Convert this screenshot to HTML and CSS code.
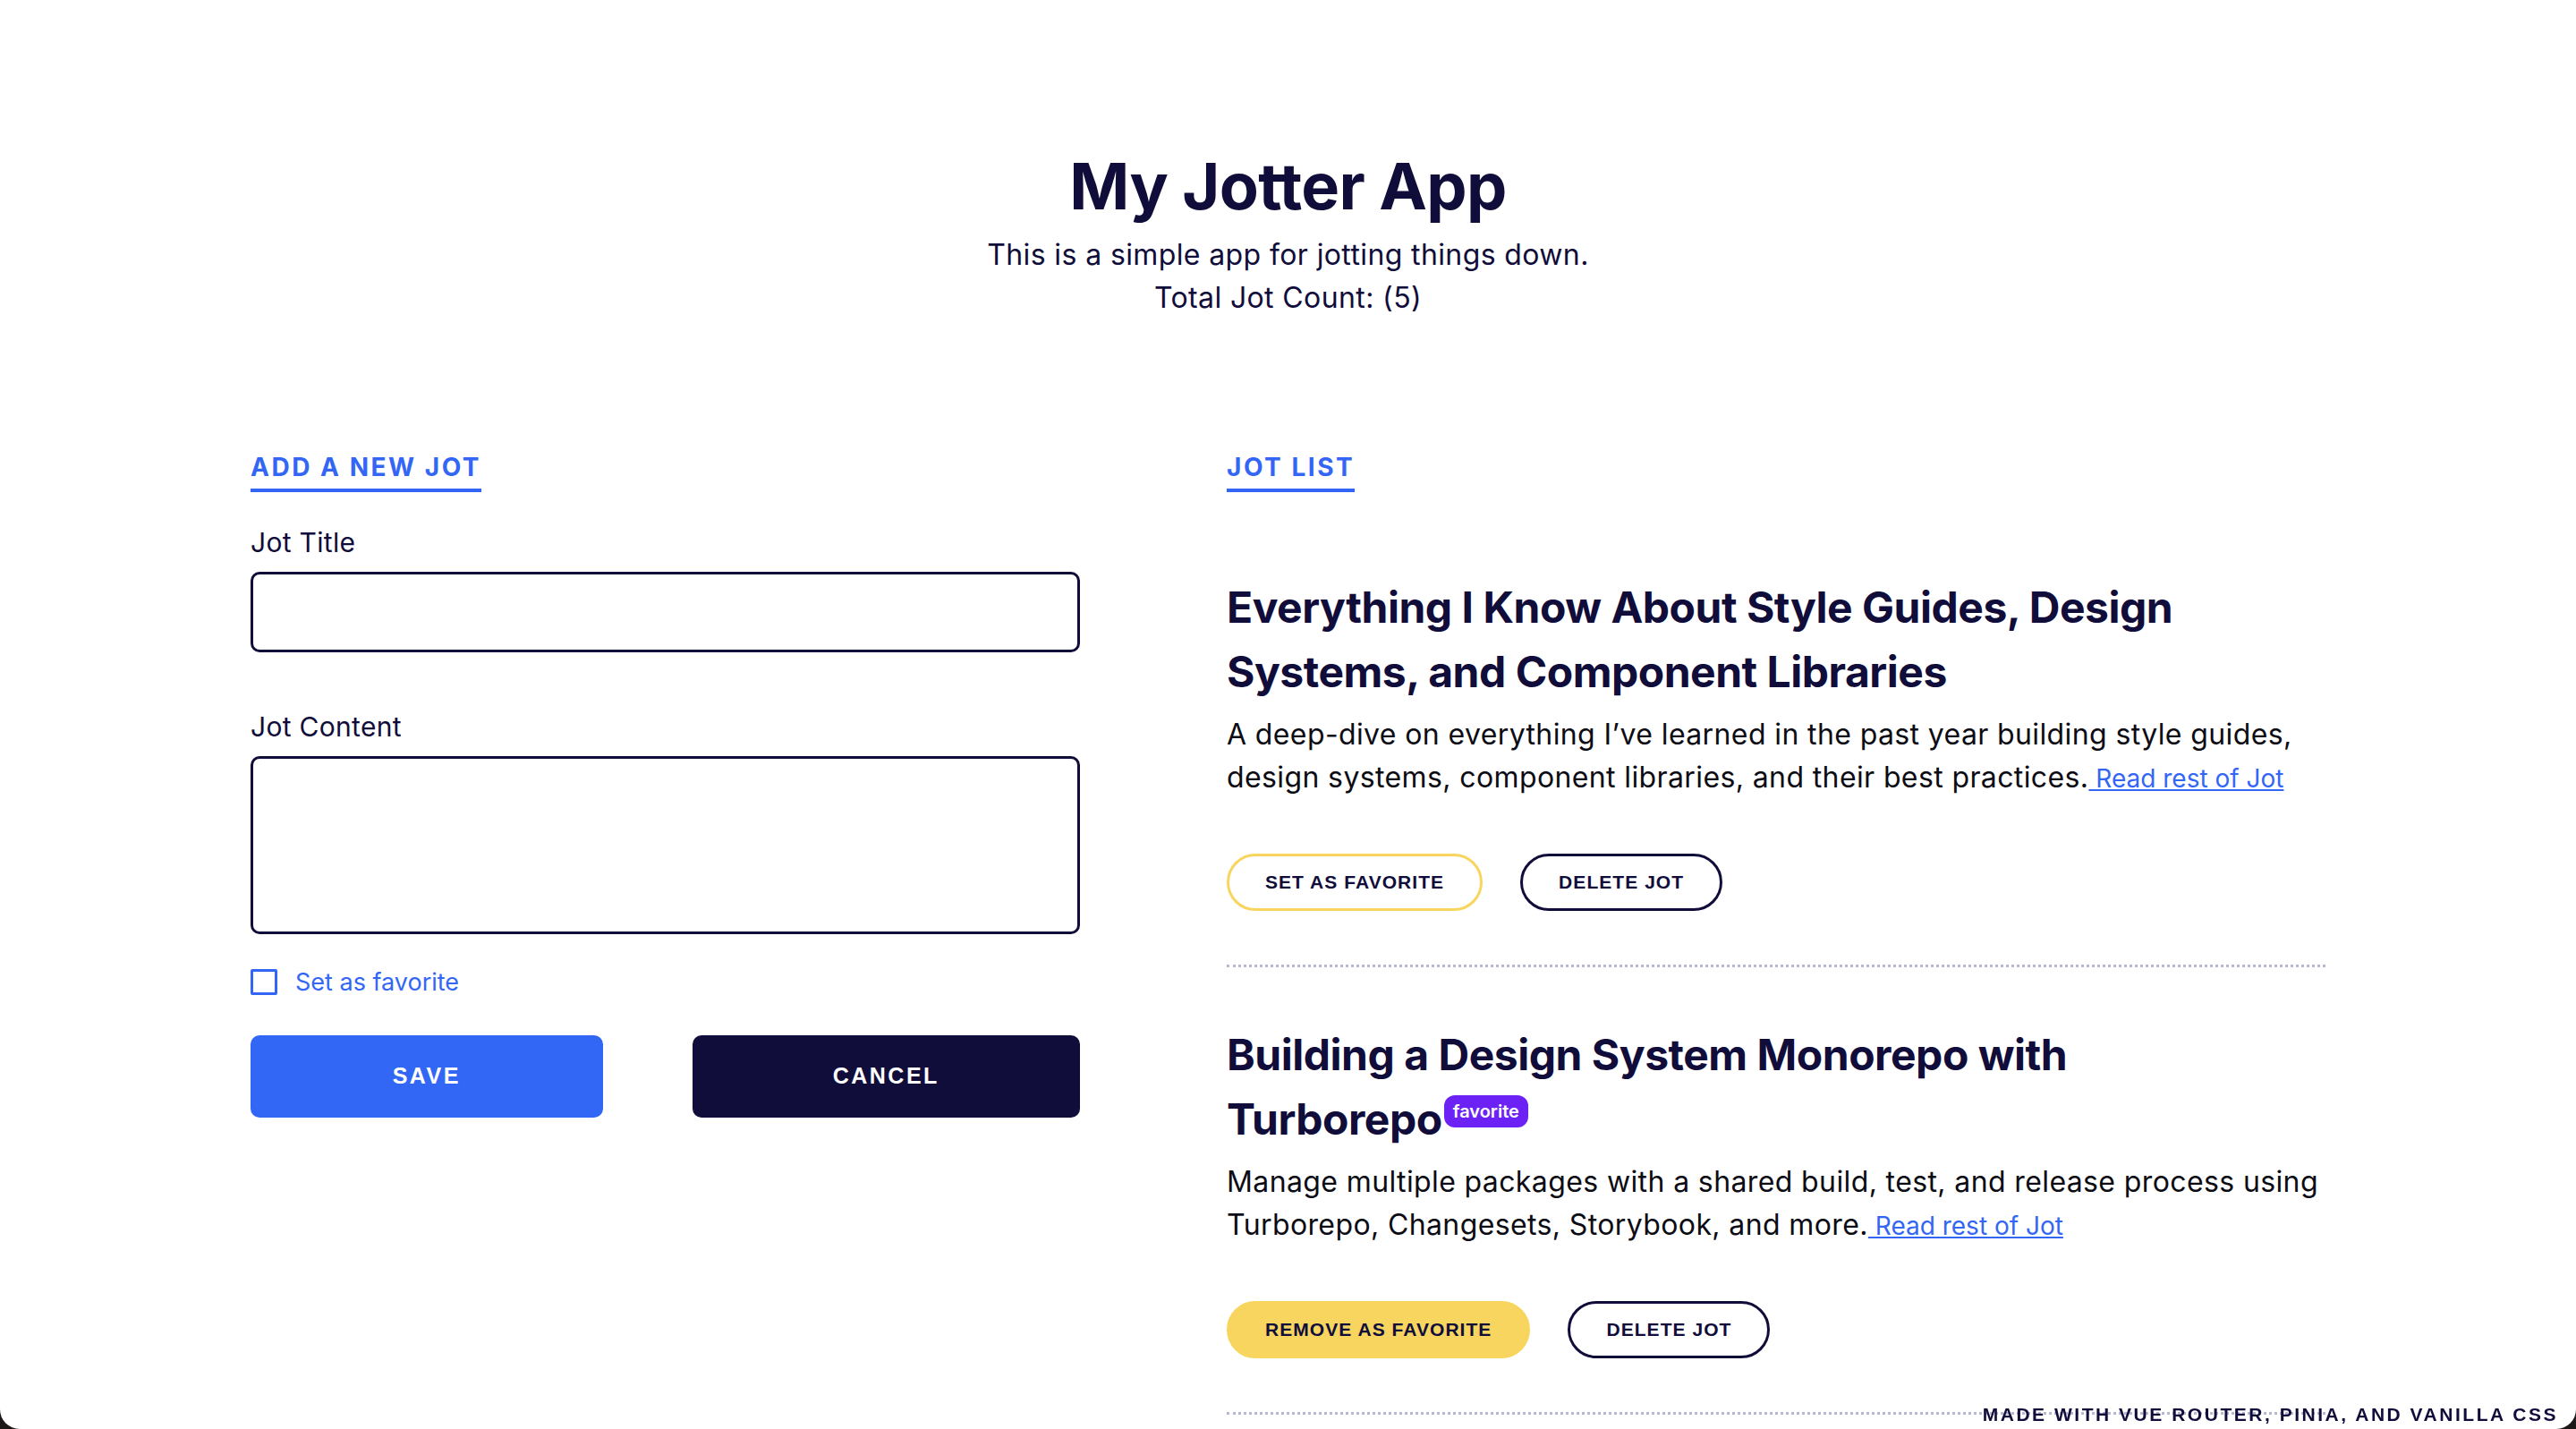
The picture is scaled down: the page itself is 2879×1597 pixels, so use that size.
FILE: index.html
```html
<!DOCTYPE html>
<html lang="en">
<head>
<meta charset="utf-8">
<title>My Jotter App</title>
<link rel="stylesheet" href="styles.css">
</head>
<body>
<div class="window">
  <header class="hero">
    <h1 class="hero-title">My Jotter App</h1>
    <p class="hero-text">This is a simple app for jotting things down.</p>
    <p class="hero-text">Total Jot Count: (5)</p>
  </header>

  <main class="columns">
    <section class="form-col">
      <h2 class="section-title">Add a new jot</h2>
      <form class="jot-form">
        <label class="field-label" for="jot-title">Jot Title</label>
        <input class="field-input" id="jot-title" type="text">
        <label class="field-label field-label--spaced" for="jot-content">Jot Content</label>
        <textarea class="field-textarea" id="jot-content"></textarea>
        <label class="check-row">
          <input class="check-box" type="checkbox">
          <span class="check-text">Set as favorite</span>
        </label>
        <div class="form-actions">
          <button class="btn btn--save" type="button">Save</button>
          <button class="btn btn--cancel" type="button">Cancel</button>
        </div>
      </form>
    </section>

    <section class="list-col">
      <h2 class="section-title">Jot list</h2>
      <ul class="jot-list">
        <li class="jot">
          <h3 class="jot-title">Everything I Know About Style Guides, Design Systems, and Component Libraries</h3>
          <p class="jot-desc">A deep-dive on everything I’ve learned in the past year building style guides, design systems, component libraries, and their best practices.<a class="jot-link" href="#"> Read rest of Jot</a></p>
          <div class="jot-actions">
            <button class="pill pill--fav" type="button">Set as favorite</button>
            <button class="pill pill--delete" type="button">Delete jot</button>
          </div>
        </li>
        <li class="jot">
          <h3 class="jot-title">Building a Design System Monorepo with <span class="nowrap">Turborepo<span class="badge">favorite</span></span></h3>
          <p class="jot-desc">Manage multiple packages with a shared build, test, and release process using Turborepo, Changesets, Storybook, and more.<a class="jot-link" href="#"> Read rest of Jot</a></p>
          <div class="jot-actions">
            <button class="pill pill--unfav" type="button">Remove as favorite</button>
            <button class="pill pill--delete" type="button">Delete jot</button>
          </div>
        </li>
      </ul>
    </section>
  </main>

  <footer class="credit">Made with Vue Router, Pinia, and Vanilla CSS</footer>
</div>
</body>
</html>
```

FILE: styles.css
```css
* { box-sizing: border-box; }

html, body {
  margin: 0;
  height: 100%;
}

body {
  background: #1c1818;
  font-family: "Inter", "Liberation Sans", sans-serif;
  color: #110d3a;
  overflow: hidden;
}

.window {
  height: 100vh;
  background: #ffffff;
  border-radius: 0 0 22px 22px;
  overflow: hidden;
  padding-top: 165px;
}

.hero {
  text-align: center;
}

.hero-title {
  margin: 0 0 10px;
  font-size: 72px;
  line-height: 1.2;
  font-weight: 700;
  letter-spacing: -0.01em;
  color: #110d3a;
}

.hero-text {
  margin: 0;
  font-size: 32px;
  line-height: 48px;
  letter-spacing: 0.012em;
  color: #110d3a;
}

.columns {
  display: grid;
  grid-template-columns: 927px 1228px;
  column-gap: 164px;
  width: 2319px;
  margin: 149px auto 0;
  align-items: start;
}

.section-title {
  display: inline-block;
  margin: 0;
  font-size: 28px;
  line-height: 1.2;
  font-weight: 700;
  text-transform: uppercase;
  letter-spacing: 0.09em;
  color: #3366f5;
  padding-bottom: 6px;
  border-bottom: 4px solid #3366f5;
}

.jot-form {
  display: flex;
  flex-direction: column;
  margin-top: 34px;
}

.field-label {
  font-size: 30px;
  line-height: 45px;
  letter-spacing: 0.01em;
  color: #110d3a;
  margin-bottom: 10px;
}

.field-label--spaced {
  margin-top: 61px;
}

.field-input,
.field-textarea {
  width: 100%;
  border: 3px solid #110d3a;
  border-radius: 10px;
  font-family: inherit;
  font-size: 30px;
  padding: 0 20px;
  background: #fff;
  color: #110d3a;
}

.field-input { height: 90px; }

.field-textarea {
  height: 199px;
  resize: none;
  padding: 16px 20px;
}

.check-row {
  display: flex;
  align-items: center;
  gap: 20px;
  margin-top: 39px;
  color: #3366f5;
  font-size: 27px;
  line-height: 29px;
}

.check-box {
  appearance: none;
  -webkit-appearance: none;
  margin: 0;
  width: 30px;
  height: 29px;
  border: 3px solid #3366f5;
  border-radius: 2px;
  background: #fff;
}

.form-actions {
  display: flex;
  gap: 100px;
  margin-top: 45px;
}

.btn {
  height: 92px;
  border: 0;
  border-radius: 10px;
  font-family: "Liberation Sans", Arial, sans-serif;
  font-size: 25px;
  font-weight: 700;
  letter-spacing: 0.1em;
  text-transform: uppercase;
  color: #ffffff;
}

.btn--save {
  width: 394px;
  background: #3267f5;
}

.btn--cancel {
  width: 434px;
  background: #110d3a;
}

.jot-list {
  list-style: none;
  margin: 31px 0 0;
  padding: 0;
}

.jot {
  padding: 62px 0 60px;
  border-bottom: 3px dotted #b5b7d3;
}

.jot-title {
  margin: 0;
  font-size: 48px;
  line-height: 72px;
  font-weight: 700;
  letter-spacing: -0.01em;
  color: #110d3a;
}

.nowrap {
  white-space: nowrap;
}

.badge {
  display: inline-block;
  vertical-align: top;
  margin: 9px 0 0 2px;
  height: 36px;
  padding: 0 10px;
  border-radius: 12px;
  background: #6c22f4;
  color: #fff;
  font-size: 20px;
  line-height: 36px;
  font-weight: 600;
  letter-spacing: 0;
}

.jot-desc {
  margin: 10px 0 0;
  font-size: 32px;
  line-height: 48px;
  letter-spacing: 0.012em;
  color: #0c0c14;
}

.jot-link {
  font-size: 28px;
  letter-spacing: 0;
  color: #3366f5;
  text-decoration: underline;
}

.jot-actions {
  display: flex;
  gap: 42px;
  margin-top: 60px;
}

.pill {
  height: 64px;
  padding: 0 40px;
  border-radius: 32px;
  border: 3px solid #110d3a;
  background: #fff;
  font-family: "Liberation Sans", Arial, sans-serif;
  font-size: 21px;
  font-weight: 700;
  letter-spacing: 0.05em;
  text-transform: uppercase;
  color: #110d3a;
}

.pill--fav {
  border-color: #f7d55e;
}

.pill--unfav {
  border-color: #f7d55e;
  background: #f7d55e;
}

.credit {
  position: fixed;
  right: 20px;
  bottom: 6px;
  font-family: "Liberation Sans", Arial, sans-serif;
  font-size: 21px;
  line-height: 1;
  font-weight: 700;
  letter-spacing: 0.12em;
  text-transform: uppercase;
  color: #110d3a;
}
```
